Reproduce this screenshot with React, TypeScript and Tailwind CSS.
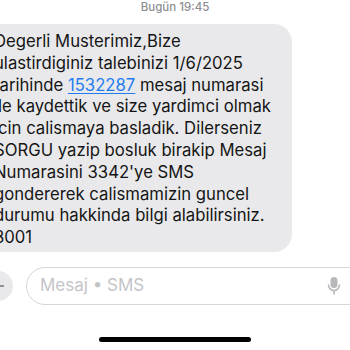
import { Plus } from 'lucide-react'

const lines: React.ReactNode[] = [
  'Degerli Musterimiz,Bize',
  'ulastirdiginiz talebinizi 1/6/2025',
  <>
    tarihinde <span className="text-[#1f7cf0] underline decoration-1 underline-offset-2">1532287</span> mesaj numarasi
  </>,
  'ile kaydettik ve size yardimci olmak',
  'icin calismaya basladik. Dilerseniz',
  'SORGU yazip bosluk birakip Mesaj',
  "Numarasini 3342'ye SMS",
  'gondererek calismamizin guncel',
  'durumu hakkinda bilgi alabilirsiniz.',
  '3001',
]

export default function App() {
  return (
    <div className="w-[350px] h-[350px] overflow-hidden bg-white flex flex-col font-['Inter',sans-serif]">
      <div className="text-center text-[11.5px] leading-[14px] font-medium text-[#8e8e93] mt-0">
        Bugün 19:45
      </div>

      <div className="mt-[10px] -ml-[18px] w-[310px] rounded-[18px] bg-[#e9e9eb] pl-[12px] pt-[7px] pb-[3px] text-[16.7px] leading-[21.8px] text-[#151515] whitespace-nowrap">
        {lines.map((l, i) => (
          <div key={i}>{l}</div>
        ))}
      </div>

      <div className="mt-[15px] flex items-center">
        <div className="-ml-[17px] w-[30px] h-[30px] shrink-0 rounded-full bg-[#e9e9eb] flex items-center justify-center text-[#8e8e93]">
          <Plus className="w-[18px] h-[18px]" strokeWidth={2.5} />
        </div>
        <div className="ml-[13px] flex-1 -mr-[30px] h-[38px] rounded-full border border-[#d6d6da] flex items-center pl-[13px] pr-[38px] justify-between">
          <span className="text-[17px] text-[#c4c4c8]">Mesaj • SMS</span>
          <svg width="14" height="20" viewBox="0 0 14 20" className="text-[#b8b8bc]">
            <rect x="3.5" y="1" width="7" height="11" rx="3.5" fill="currentColor" />
            <path d="M1.5 9a5.5 5.5 0 0 0 11 0M7 14.5V18" stroke="currentColor" strokeWidth="1.6" fill="none" strokeLinecap="round" />
          </svg>
        </div>
      </div>

      <div className="mt-[32px] mx-auto w-[152px] h-[5px] rounded-full bg-black" />
    </div>
  )
}
